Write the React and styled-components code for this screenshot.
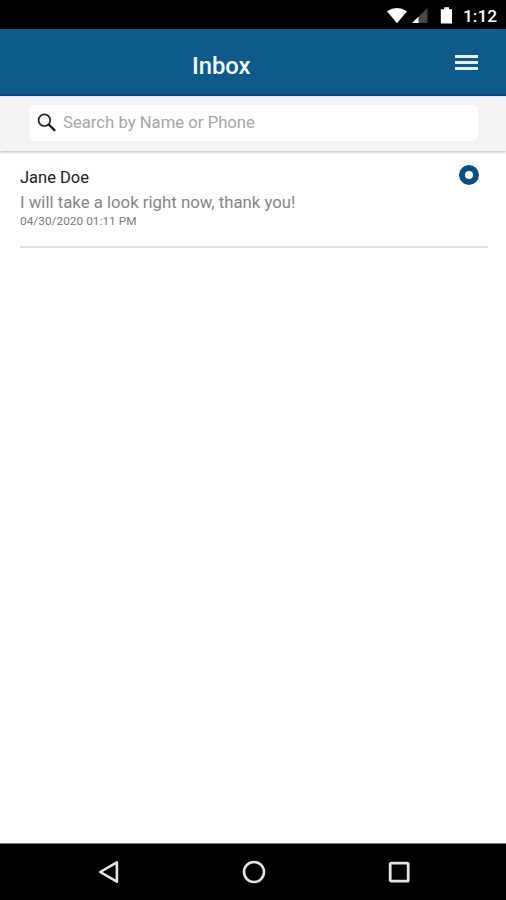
import React from 'react';
import styled, { createGlobalStyle } from 'styled-components';

const messages = [
  {
    id: 1,
    name: 'Jane Doe',
    text: 'I will take a look right now, thank you!',
    date: '04/30/2020 01:11 PM',
    unread: true,
  },
];

function StatusIcons() {
  return (
    <svg width="70" height="29" viewBox="386 0 70 29">
      <path d="M387 11.2 Q397 4.6 407 11.2 L397 23.2 Z" fill="#fff" />
      <path d="M427.5 8 V23 H412 Z" fill="#484848" />
      <path d="M418.5 16.7 V23 H412 Z" fill="#fff" />
      <path d="M444.2 7.3 H449 V9.2 H452 V23.5 H440.8 V9.2 H444.2 Z" fill="#fff" />
    </svg>
  );
}

function SearchIcon() {
  return (
    <svg width="20" height="20" viewBox="0 0 20 20" fill="none" stroke="#222">
      <circle cx="7.4" cy="7.2" r="5.8" strokeWidth="1.7" />
      <path d="M11.6 11.4 L18.2 17.9" strokeWidth="2.3" />
    </svg>
  );
}

function App() {
  return (
    <Screen>
      <GlobalStyle />
      <StatusBar>
        <StatusIcons />
        <Clock>1:12</Clock>
      </StatusBar>
      <Header>
        <Title>Inbox</Title>
        <MenuButton aria-label="Menu">
          <MenuLine />
          <MenuLine />
          <MenuLine />
        </MenuButton>
      </Header>
      <SearchBar>
        <SearchBox>
          <SearchIcon />
          <SearchText>Search by Name or Phone</SearchText>
        </SearchBox>
      </SearchBar>
      <MessageList>
        {messages.map((message) => (
          <MessageItem key={message.id}>
            <MessageBody>
              <Name>{message.name}</Name>
              <Preview>{message.text}</Preview>
              <DateText>{message.date}</DateText>
            </MessageBody>
            {message.unread && <UnreadDot />}
          </MessageItem>
        ))}
      </MessageList>
      <NavBar>
        <svg width="22" height="24" viewBox="0 0 22 24" fill="none" stroke="#e4e4e4" strokeWidth="2.6" strokeLinejoin="round">
          <path d="M2.2 12 L18.9 2.3 V21.7 Z" />
        </svg>
        <svg width="24" height="24" viewBox="0 0 24 24" fill="none" stroke="#e4e4e4" strokeWidth="2.6">
          <circle cx="12" cy="12" r="10" />
        </svg>
        <svg width="22" height="24" viewBox="0 0 22 24" fill="none" stroke="#e4e4e4" strokeWidth="2.8">
          <rect x="2.2" y="3.2" width="18" height="18" rx="1.2" />
        </svg>
      </NavBar>
    </Screen>
  );
}

const GlobalStyle = createGlobalStyle`
  * {
    box-sizing: border-box;
  }
  body {
    margin: 0;
    font-family: Roboto, sans-serif;
  }
`;

const Screen = styled.div`
  display: flex;
  flex-direction: column;
  height: 100vh;
  overflow: hidden;
  background-color: #fff;
`;

const StatusBar = styled.div`
  display: flex;
  flex: none;
  justify-content: flex-end;
  height: 29px;
  padding-right: 9px;
  background-color: #000;
`;

const Clock = styled.span`
  width: 34px;
  margin-left: 7px;
  color: #fff;
  font-size: 17.3px;
  font-weight: 500;
  line-height: 32px;
  white-space: nowrap;
`;

const Header = styled.header`
  display: flex;
  flex: none;
  align-items: flex-start;
  justify-content: space-between;
  height: 67px;
  padding: 0 28px 0 192px;
  background-color: #0d5a8b;
  border-bottom: 2px solid #07497b;
`;

const Title = styled.h1`
  margin: 0;
  color: #f4f8fb;
  font-size: 23.8px;
  font-weight: 500;
  line-height: 75px;
`;

const MenuButton = styled.button`
  display: flex;
  flex-direction: column;
  gap: 3px;
  width: 23px;
  margin-top: 26px;
  padding: 0;
  border: none;
  background: none;
`;

const MenuLine = styled.span`
  height: 3px;
  width: 23px;
  background-color: #e6eff8;
`;

const SearchBar = styled.div`
  flex: none;
  height: 55px;
  padding: 8px 28px 0 29px;
  background-color: #f4f4f4;
  border-top: 1px solid #dce5f0;
  box-shadow: 0 1px 3px rgba(0, 0, 0, 0.3);
`;

const SearchBox = styled.div`
  display: flex;
  align-items: center;
  height: 36px;
  padding-left: 8px;
  border-radius: 5px;
  background-color: #fff;
`;

const SearchText = styled.span`
  margin-left: 6px;
  color: #a6a6a6;
  font-size: 16.7px;
  line-height: 20px;
  white-space: nowrap;
`;

const MessageList = styled.main`
  flex: 1;
  padding: 16px 18px 0 20px;
`;

const MessageItem = styled.article`
  display: flex;
  justify-content: space-between;
  height: 81px;
  padding-right: 9px;
  border-bottom: 2px solid #dedede;
`;

const MessageBody = styled.div`
  display: flex;
  flex-direction: column;
  white-space: nowrap;
`;

const Name = styled.span`
  color: #202020;
  font-size: 16.5px;
  line-height: 22px;
`;

const Preview = styled.span`
  color: #858585;
  font-size: 16.78px;
  line-height: 27px;
`;

const DateText = styled.span`
  color: #7a7a7a;
  font-size: 11.8px;
  letter-spacing: 0.04px;
  line-height: 10px;
`;

const UnreadDot = styled.span`
  width: 20px;
  height: 20px;
  margin-top: -2px;
  border: 6px solid #0c5083;
  border-radius: 50%;
`;

const NavBar = styled.nav`
  display: flex;
  flex: none;
  align-items: center;
  justify-content: space-between;
  height: 57px;
  padding: 0 96px 0 98px;
  background-color: #000;
  border-top: 1px solid #777;
`;

export default App;
